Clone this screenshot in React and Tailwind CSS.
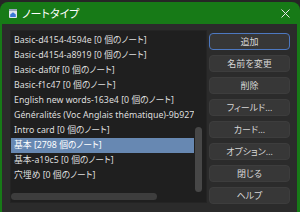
import { useState } from 'react';

const noteTypes = [
  'Basic-d4154-4594e [0 個のノート]',
  'Basic-d4154-a8919 [0 個のノート]',
  'Basic-daf0f [0 個のノート]',
  'Basic-f1c47 [0 個のノート]',
  'English new words-163e4 [0 個のノート]',
  'Généralités (Voc Anglais thématique)-9b927 [0 個のノート]',
  'Intro card [0 個のノート]',
  '基本 [2798 個のノート]',
  '基本-a19c5 [0 個のノート]',
  '穴埋め [0 個のノート]',
];

const actions = ['追加', '名前を変更', '削除', 'フィールド…', 'カード…', 'オプション…', '閉じる', 'ヘルプ'];

const App = () => {
  const [selected, setSelected] = useState(7);

  return (
    <div className="h-[212px] w-[300px] overflow-hidden bg-[#262626] pt-[2px] font-['Noto_Sans','Noto_Sans_CJK_JP',sans-serif] [font-feature-settings:'palt']">
      <div className="flex h-[210px] flex-col rounded-t-[8px] bg-[#177a17]">
        {/* title bar */}
        <div className="flex h-[22px] shrink-0 items-center pl-[9px] pr-[10px]">
          <svg width="8" height="9" viewBox="0 0 8 9">
            <rect x="0" y="0" width="8" height="9" rx="1" fill="#dfe4ee" />
            <rect x="0" y="0" width="8" height="2" fill="#9aa6bc" />
            <path d="M4 3.2 L6.8 5.6 L6.8 8 L1.2 8 L1.2 5.6 Z" fill="#3a78d6" />
          </svg>
          <span className="ml-[5px] text-[11px] leading-none text-white">ノートタイプ</span>
          <svg className="ml-auto" width="9" height="9" viewBox="0 0 9 9">
            <path d="M0.5 0.5 L8.5 8.5 M8.5 0.5 L0.5 8.5" stroke="#e8e8e8" strokeWidth="1" />
          </svg>
        </div>

        {/* body */}
        <div className="ml-[2px] mr-[3px] flex flex-1 gap-[2px] bg-[#2b2b2b] pl-[8px] pr-[7px] pt-[6px]">
          <div className="flex h-[173px] w-[197px] flex-col border border-[#242424] bg-[#1f1f1f]">
            <div className="flex min-h-0 flex-1">
              <ul className="min-w-0 flex-1 overflow-hidden pt-[2px]">
                {noteTypes.map((name, i) => (
                  <li
                    key={name}
                    onClick={() => setSelected(i)}
                    className={`h-[15px] whitespace-nowrap pl-[3px] text-[8.8px] leading-[15px] ${
                      i === selected ? 'bg-[#6788b2] text-white' : 'text-[#dedede]'
                    }`}
                  >
                    {name}
                  </li>
                ))}
              </ul>
              <div className="flex w-[12px] shrink-0 flex-col justify-end">
                <div className="ml-[1px] h-[65px] w-[7px] rounded-full bg-[#474747]" />
              </div>
            </div>
            <div className="h-[10px] shrink-0 pt-[1px]">
              <div className="h-[7px] w-[146px] rounded-full bg-[#3d3d3d]" />
            </div>
          </div>

          <div className="flex w-[81px] flex-col gap-[5px] pt-[3px]">
            {actions.map((label, i) => (
              <button
                key={label}
                type="button"
                className={`flex h-[17px] items-center justify-center rounded-[4px] bg-[#373737] text-[9px] leading-none text-[#d6d6d6] ${
                  i === 0 ? 'border-[1.5px] border-[#4d78c0]' : 'border border-[#3d3d3d]'
                }`}
              >
                {label}
              </button>
            ))}
          </div>
        </div>
      </div>
    </div>
  );
};

export default App;
